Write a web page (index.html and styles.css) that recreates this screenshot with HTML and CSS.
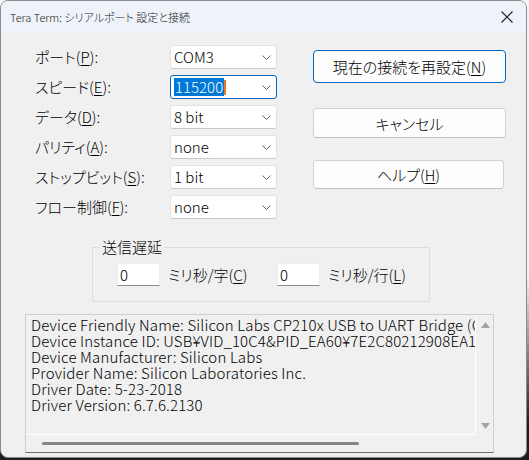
FILE: index.html
```html
<!DOCTYPE html>
<html lang="ja">
<head>
<meta charset="utf-8">
<title>Tera Term: シリアルポート 設定と接続</title>
<link rel="stylesheet" href="styles.css">
</head>
<body>
<div class="window">
  <div class="titlebar">
    <span class="title">Tera Term: シリアルポート 設定と接続</span>
    <svg class="close" width="12" height="12" viewBox="0 0 12 12"><path d="M0.5 0.5 L11.5 11.5 M11.5 0.5 L0.5 11.5" stroke="#1b1b1b" stroke-width="1.1" fill="none"/></svg>
  </div>
  <div class="content">
    <div class="top">
      <div class="form">
        <span class="label">ポート(<u>P</u>):</span>
        <div class="combo"><span>COM3</span><svg class="chev" width="9" height="5" viewBox="0 0 9 5"><path d="M0.5 0.5 L4.5 4.5 L8.5 0.5" stroke="#5f5f5f" fill="none"/></svg></div>
        <span class="label">スピード(<u>E</u>):</span>
        <div class="combo focus"><span class="sel">115200</span><span class="caret"></span><svg class="chev" width="9" height="5" viewBox="0 0 9 5"><path d="M0.5 0.5 L4.5 4.5 L8.5 0.5" stroke="#5f5f5f" fill="none"/></svg></div>
        <span class="label">データ(<u>D</u>):</span>
        <div class="combo"><span>8 bit</span><svg class="chev" width="9" height="5" viewBox="0 0 9 5"><path d="M0.5 0.5 L4.5 4.5 L8.5 0.5" stroke="#5f5f5f" fill="none"/></svg></div>
        <span class="label">パリティ(<u>A</u>):</span>
        <div class="combo"><span>none</span><svg class="chev" width="9" height="5" viewBox="0 0 9 5"><path d="M0.5 0.5 L4.5 4.5 L8.5 0.5" stroke="#5f5f5f" fill="none"/></svg></div>
        <span class="label">ストップビット(<u>S</u>):</span>
        <div class="combo"><span>1 bit</span><svg class="chev" width="9" height="5" viewBox="0 0 9 5"><path d="M0.5 0.5 L4.5 4.5 L8.5 0.5" stroke="#5f5f5f" fill="none"/></svg></div>
        <span class="label">フロー制御(<u>F</u>):</span>
        <div class="combo"><span>none</span><svg class="chev" width="9" height="5" viewBox="0 0 9 5"><path d="M0.5 0.5 L4.5 4.5 L8.5 0.5" stroke="#5f5f5f" fill="none"/></svg></div>
      </div>
      <div class="buttons">
        <div class="btn default">現在の接続を再設定(<u>N</u>)</div>
        <div class="btn cancel">キャンセル</div>
        <div class="btn help">ヘルプ(<u>H</u>)</div>
      </div>
    </div>
    <fieldset class="delay">
      <legend>送信遅延</legend>
      <div class="delay-row">
        <div class="edit">0</div>
        <span class="dlabel first">ミリ秒/字(<u>C</u>)</span>
        <div class="edit">0</div>
        <span class="dlabel">ミリ秒/行(<u>L</u>)</span>
      </div>
    </fieldset>
    <div class="info">
      <div class="text">
        <div>Device Friendly Name: Silicon Labs CP210x USB to UART Bridge (COM3)</div>
        <div>Device Instance ID: USB¥VID_10C4&amp;PID_EA60¥7E2C80212908EA11B0B1F4A1</div>
        <div>Device Manufacturer: Silicon Labs</div>
        <div>Provider Name: Silicon Laboratories Inc.</div>
        <div>Driver Date: 5-23-2018</div>
        <div>Driver Version: 6.7.6.2130</div>
      </div>
      <div class="vscroll">
        <svg width="9" height="6" viewBox="0 0 9 6"><path d="M0 6 L4.5 0 L9 6 Z" fill="#a3a3a3"/></svg>
        <svg width="9" height="6" viewBox="0 0 9 6"><path d="M0 0 L4.5 6 L9 0 Z" fill="#a3a3a3"/></svg>
      </div>
      <div class="hscroll"><div class="thumb"></div></div>
      <div class="corner"></div>
    </div>
  </div>
</div>
</body>
</html>
```
FILE: styles.css
```css
* { box-sizing: border-box; }
html, body { margin: 0; height: 100%; }
body {
  background: linear-gradient(to bottom, #f6f6f6 0, #f6f6f6 60%, #1e1e1e 92%);
  font-family: "Noto Sans CJK JP", "Noto Sans", sans-serif;
  font-feature-settings: "palt";
  font-weight: 300;
  color: #000;
}
.window {
  width: 527px;
  height: 458px;
  border: 1px solid #8a8a8a;
  border-radius: 8px;
  overflow: hidden;
  background: #f0f0f0;
  display: flex;
  flex-direction: column;
}
.titlebar {
  height: 31px;
  flex: none;
  background: #eef3f9;
  display: flex;
  align-items: center;
  justify-content: space-between;
  padding: 0 13px 0 9px;
  font-size: 11px;
  color: #1a1a1a;
}
.close { display: block; }
.content { flex: 1; padding-top: 13px; }
.top { display: flex; margin-left: 34px; }
.form {
  display: grid;
  grid-template-columns: 135px 107px;
  grid-auto-rows: 24px;
  row-gap: 6px;
  align-items: center;
}
.label { font-size: 15px; line-height: 24px; white-space: nowrap; }
.combo {
  height: 24px;
  background: #fff;
  border: 1px solid #e3e3e3;
  border-bottom-color: #c9c9c9;
  border-radius: 3px;
  display: flex;
  align-items: center;
  padding-left: 3px;
  font-size: 15px;
  line-height: 18px;
}
.combo.focus { border-color: #0067c0; }
.combo .chev { margin-left: auto; margin-right: 5px; }
.sel { background: #0078d7; color: #fff; padding: 0 1px; }
.caret { width: 2px; height: 15px; background: #e87722; }
u { text-decoration: underline; text-underline-offset: 2px; text-decoration-thickness: 1px; }
.buttons {
  margin-left: 36px;
  width: 193px;
  padding-top: 5px;
  display: flex;
  flex-direction: column;
}
.btn {
  height: 30px;
  background: #fdfdfd;
  border: 1px solid #d2d2d2;
  border-bottom-color: #c2c2c2;
  border-radius: 4px;
  font-size: 15px;
  display: flex;
  align-items: center;
  justify-content: center;
}
.btn.default { height: 33px; border: 1.5px solid #0067c0; }
.btn.cancel { margin-top: 25px; }
.btn.help { margin-top: 22px; height: 29px; width: 191px; }
.delay {
  margin: 20px 0 0 91px;
  width: 338px;
  border: 1px solid #dcdcdc;
  padding: 8px 0 15px 0;
}
.delay legend {
  font-size: 15px;
  line-height: 16px;
  margin-left: 7px;
  padding: 0 2px;
}
.delay-row { display: flex; align-items: center; height: 23px; padding-left: 24px; }
.edit {
  width: 43px;
  height: 23px;
  background: #fff;
  border: 1px solid #ececec;
  border-bottom-color: #8a8a8a;
  font-size: 15px;
  line-height: 21px;
  padding-left: 2px;
}
.dlabel { font-size: 15px; margin-left: 8px; white-space: nowrap; }
.dlabel.first { width: 109px; }
.info {
  margin: 12px 0 0 24px;
  width: 469px;
  height: 139px;
  border: 1px solid #cfcfcf;
  border-bottom-color: #6e6e6e;
  display: grid;
  grid-template-columns: 450px 17px;
  grid-template-rows: 120px 17px;
}
.text {
  border-right: 1px solid #fff;
  border-bottom: 1px solid #fff;
  padding: 2px 0 0 5px;
  overflow: hidden;
  white-space: nowrap;
  font-size: 15px;
  line-height: 16px;
  letter-spacing: 0.15px;
}
.vscroll {
  display: flex;
  flex-direction: column;
  align-items: center;
  justify-content: space-between;
  padding: 7px 0 6px 1px;
}
.vscroll svg { display: block; }
.hscroll { display: flex; align-items: center; padding-left: 16px; }
.thumb { width: 317px; height: 3px; border-radius: 2px; background: #858585; }
```
